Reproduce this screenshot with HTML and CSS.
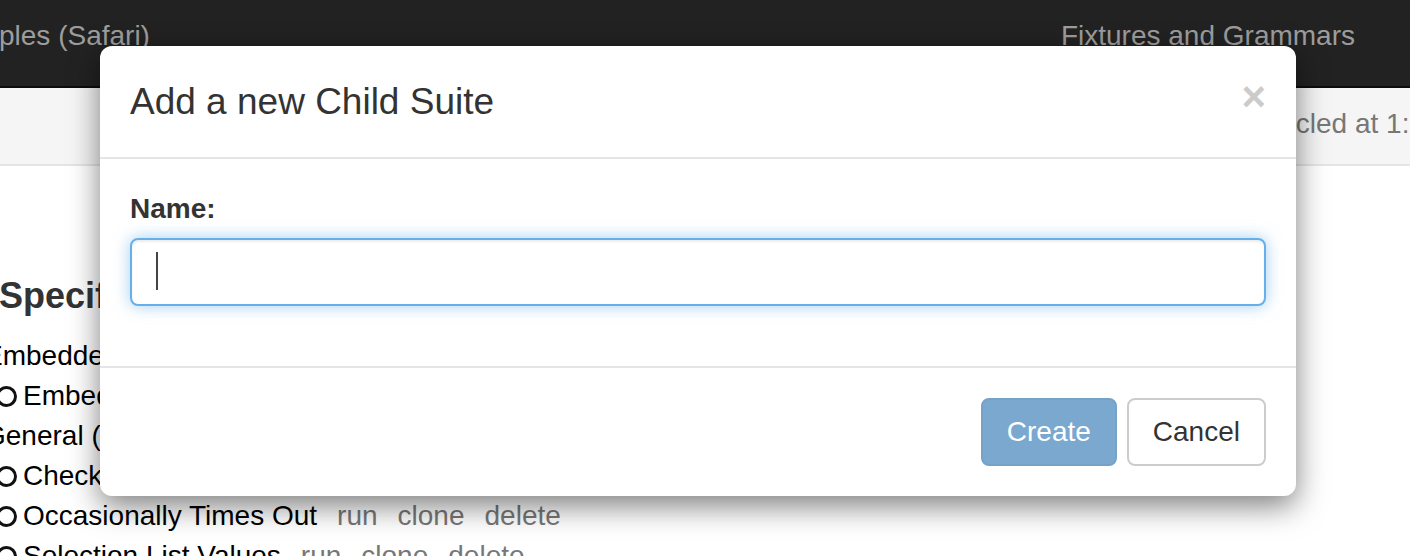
FILE: index.html
```html
<!DOCTYPE html>
<html>
<head>
<meta charset="utf-8">
<link rel="stylesheet" href="styles.css">
</head>
<body>
<div class="page">
  <nav class="navbar">
    <span class="nav-brand">ples (Safari)</span>
    <span class="nav-link">Fixtures and Grammars</span>
  </nav>
  <div class="subbar">
    <span class="subbar-text">Recycled at 1:52:10 PM</span>
  </div>
  <main class="content">
    <h3 class="spec-title">Specifications</h3>
    <div class="suite">Embedded</div>
    <div class="spec"><span class="ring"></span><span class="spec-name">Embedded Spec</span></div>
    <div class="suite">General (Tables)</div>
    <div class="spec"><span class="ring"></span><span class="spec-name">Check Properties</span></div>
    <div class="spec"><span class="ring"></span><span class="spec-name">Occasionally Times Out</span><a class="act">run</a><a class="act">clone</a><a class="act">delete</a></div>
    <div class="spec"><span class="ring"></span><span class="spec-name">Selection List Values</span><a class="act">run</a><a class="act">clone</a><a class="act">delete</a></div>
  </main>

  <div class="modal">
    <div class="modal-header">
      <h4 class="modal-title">Add a new Child Suite</h4>
      <span class="close">×</span>
    </div>
    <div class="modal-body">
      <div class="form-group">
        <label class="label">Name:</label>
        <div class="input-wrap">
          <input class="input" type="text">
          <span class="caret"></span>
        </div>
      </div>
    </div>
    <div class="modal-footer">
      <button class="btn btn-primary">Create</button>
      <button class="btn btn-default">Cancel</button>
    </div>
  </div>
</div>
</body>
</html>
```
FILE: styles.css
```css
html, body {
  margin: 0;
  padding: 0;
}
body {
  font-family: "Liberation Sans", Arial, sans-serif;
  font-size: 28px;
  line-height: 40px;
  color: #000;
  background: #fff;
  width: 1410px;
  height: 556px;
  overflow: hidden;
}
.page {
  position: relative;
  width: 1410px;
  height: 556px;
  overflow: hidden;
}
.navbar {
  height: 70px;
  padding-top: 16px;
  background: #222;
  border-bottom: 2px solid #0c0c0c;
  display: flex;
  color: #9d9d9d;
  white-space: nowrap;
}
.nav-brand {
  margin-left: -1px;
}
.nav-link {
  margin-left: 911px;
}
.subbar {
  height: 60px;
  padding-top: 16px;
  background: #f5f5f5;
  border-bottom: 2px solid #e5e5e5;
  display: flex;
  color: #777;
  white-space: nowrap;
}
.subbar-text {
  margin-left: 1232px;
}
.content {
  padding-top: 110px;
  margin-left: -16px;
  white-space: nowrap;
}
.spec-title {
  margin: 0 0 20px 15px;
  font-size: 36px;
  line-height: 40px;
  font-weight: bold;
  color: #333;
}
.suite {
  height: 40px;
}
.spec {
  display: flex;
  align-items: center;
  height: 40px;
  padding-left: 12px;
}
.ring {
  width: 15px;
  height: 15px;
  border: 3px solid #111;
  border-radius: 50%;
  margin-right: 6px;
  flex: none;
}
.act {
  color: #777;
  margin-left: 20px;
}

/* modal */
.modal {
  position: absolute;
  left: 100px;
  top: 46px;
  width: 1196px;
  background: #fff;
  border-radius: 12px;
  box-shadow: 0 10px 30px rgba(0, 0, 0, 0.5);
  color: #333;
}
.modal-header {
  padding: 30px;
  border-bottom: 2px solid #e5e5e5;
  display: flex;
  justify-content: space-between;
  align-items: flex-start;
}
.modal-title {
  margin: 0;
  font-size: 37px;
  line-height: 51px;
  font-weight: normal;
  color: #333;
}
.close {
  font-size: 42px;
  line-height: 42px;
  font-weight: bold;
  color: #000;
  opacity: 0.2;
}
.modal-body {
  padding: 30px;
}
.form-group {
  margin-bottom: 30px;
}
.label {
  display: block;
  font-weight: bold;
  margin-bottom: 9px;
  color: #333;
}
.input-wrap {
  position: relative;
}
.input {
  display: block;
  box-sizing: border-box;
  width: 100%;
  height: 68px;
  margin: 0;
  padding: 12px 24px;
  font: inherit;
  border: 2px solid #66afe9;
  border-radius: 8px;
  outline: none;
  background: #fff;
  box-shadow: inset 0 2px 2px rgba(0, 0, 0, 0.075), 0 0 16px rgba(102, 175, 233, 0.6);
}
.caret {
  position: absolute;
  left: 26px;
  top: 14px;
  width: 2px;
  height: 38px;
  background: #444;
}
.modal-footer {
  padding: 30px;
  border-top: 2px solid #e5e5e5;
  display: flex;
  justify-content: flex-end;
  gap: 10px;
}
.btn {
  box-sizing: border-box;
  height: 68px;
  padding: 0 24px;
  font: inherit;
  font-size: 28px;
  border-radius: 8px;
  border: 2px solid transparent;
}
.btn-primary {
  background: #7aa8cf;
  border-color: #77a2c6;
  color: #fff;
}
.btn-default {
  background: #fff;
  border-color: #ccc;
  color: #333;
}
```
